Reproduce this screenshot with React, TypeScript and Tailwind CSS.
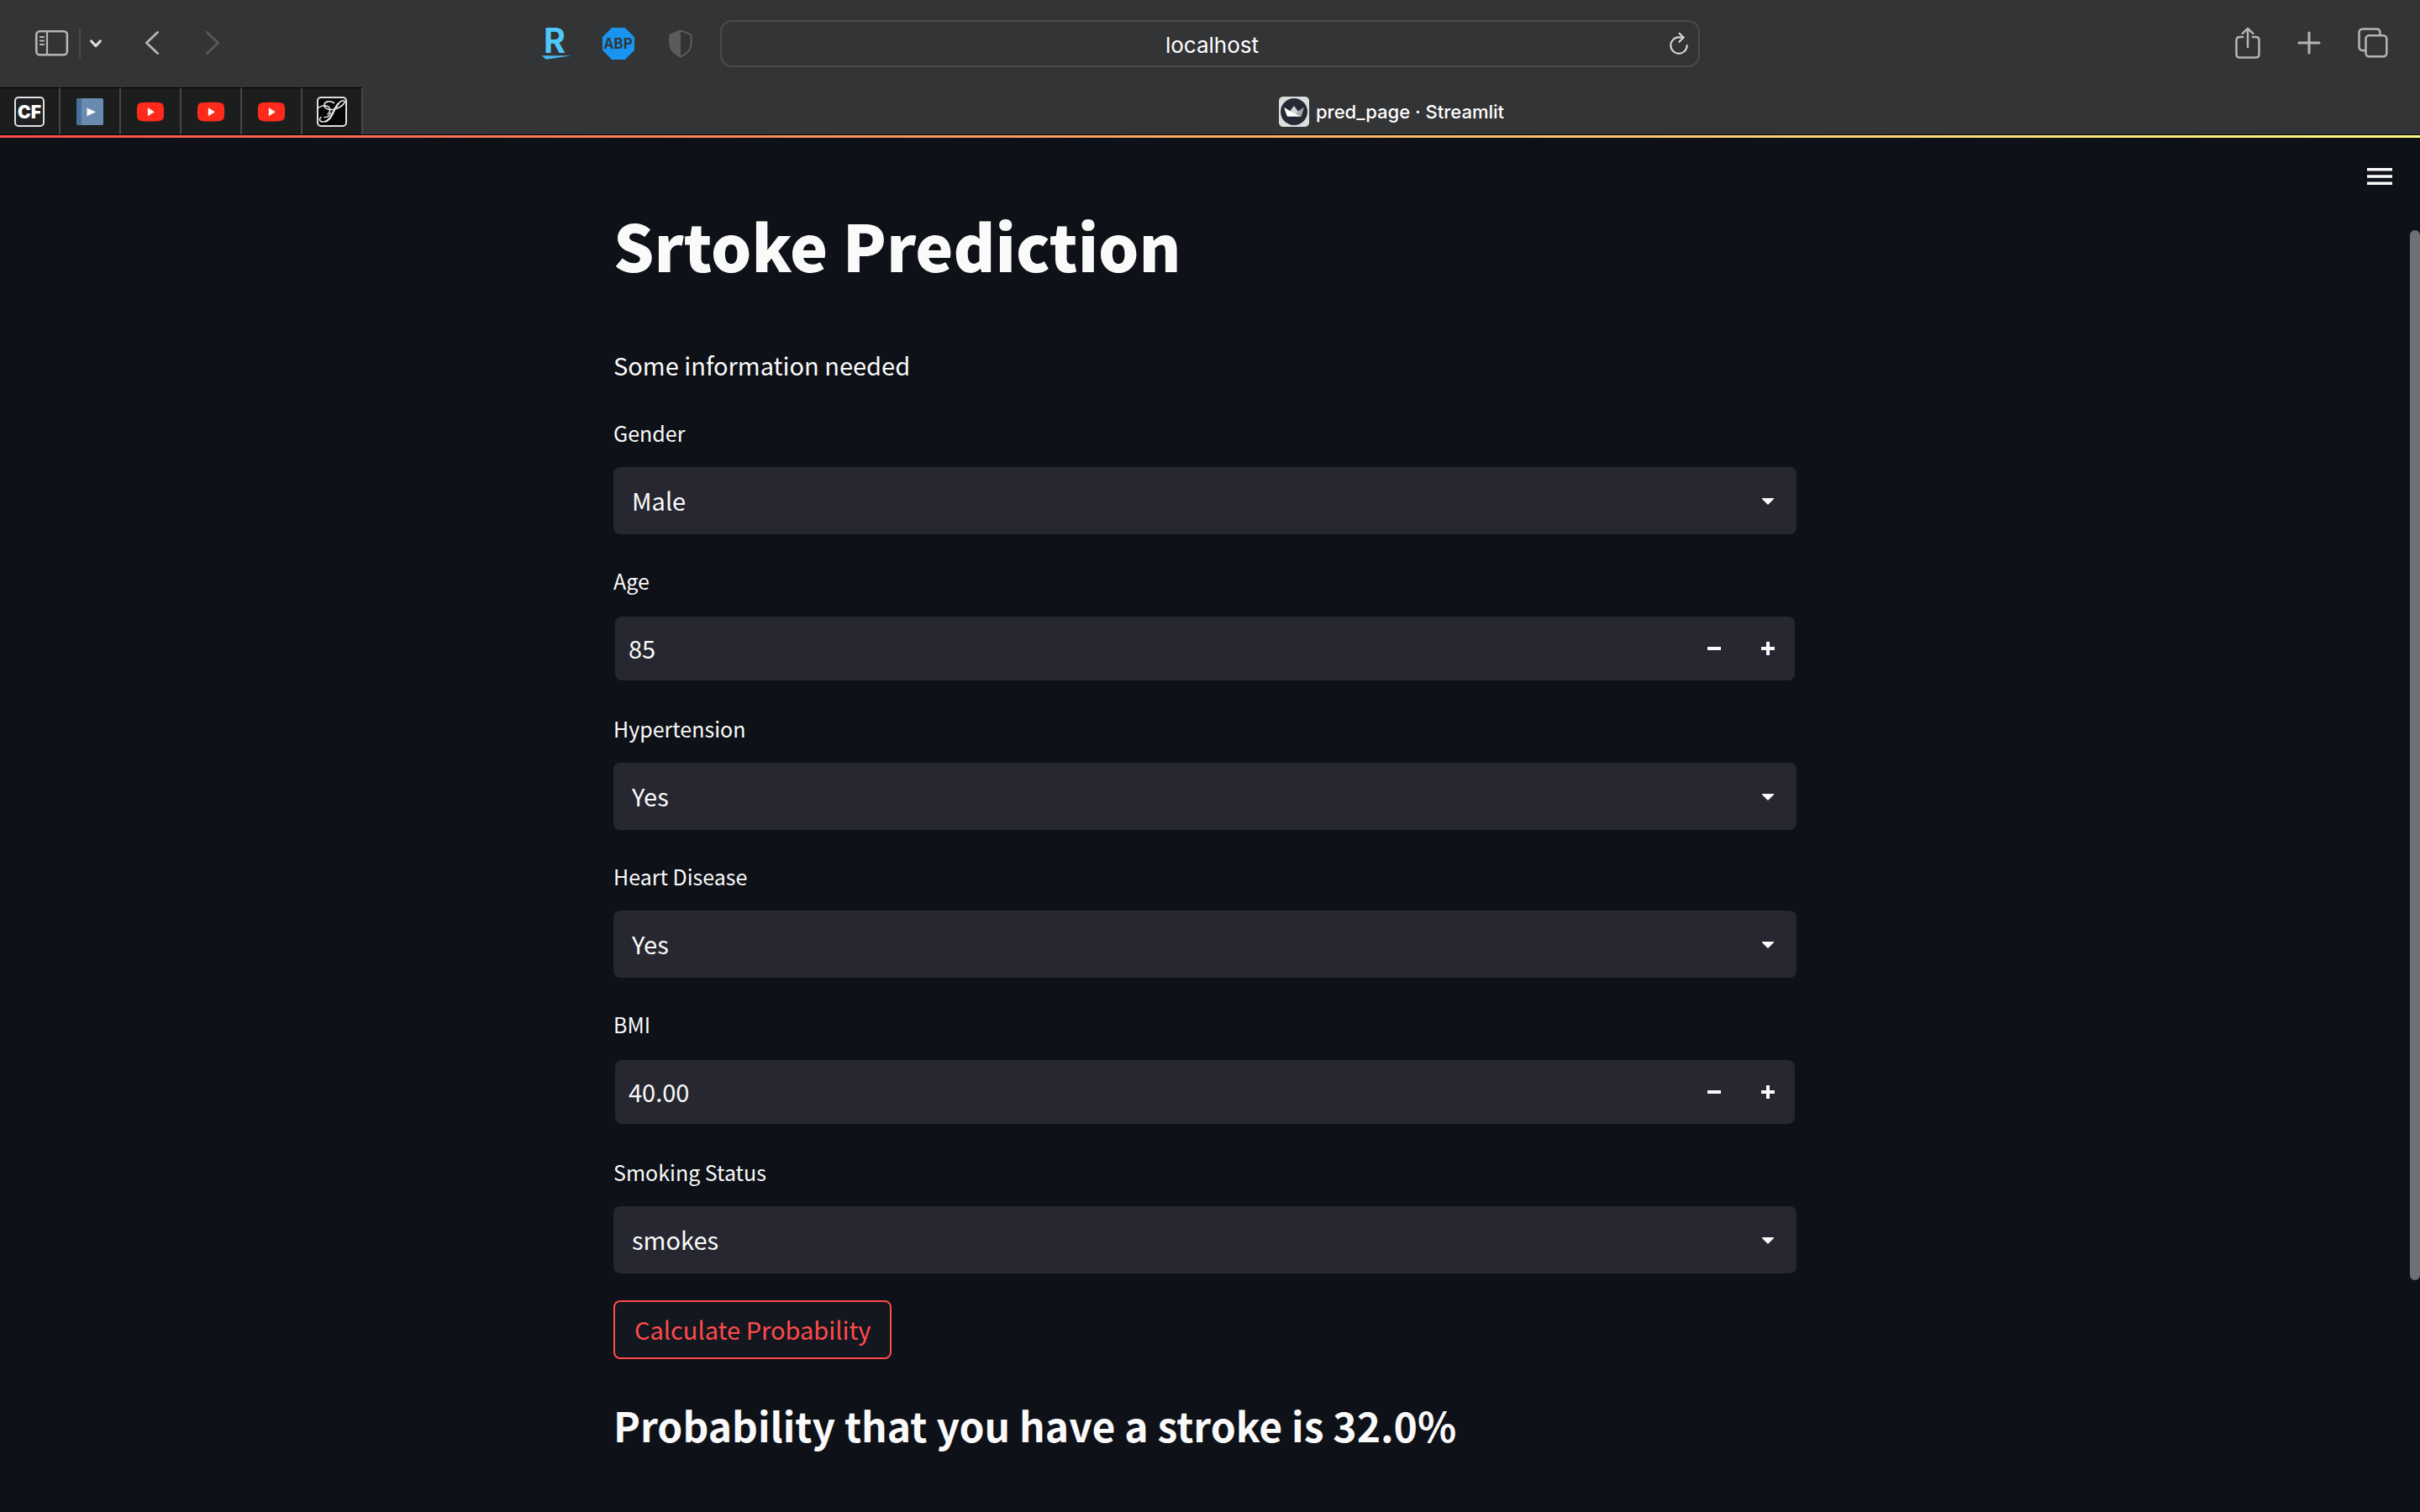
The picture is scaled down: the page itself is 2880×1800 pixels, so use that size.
import { useState } from "react";
import type { ReactNode } from "react";

type IconProps = { className?: string };

function SidebarIcon() {
  return (
    <svg width="40" height="32" viewBox="0 0 40 32" fill="none" stroke="#b4b5b6" strokeLinecap="round">
      <rect x="1.3" y="1.3" width="36.6" height="28" rx="4" strokeWidth="2.6" />
      <path d="M14 2v27" strokeWidth="2.2" />
      <path d="M5.8 8h4.4M5.800 12.500h4.400M5.800 17h4.400" strokeWidth="1.8" />
    </svg>
  );
}

function ChevronDown() {
  return (
    <svg width="16" height="12" viewBox="0 0 16 12" fill="none" stroke="#dededf" strokeWidth="3" strokeLinecap="round" strokeLinejoin="round">
      <path d="M2.500 2.800 8 8.600l5.500-5.800" />
    </svg>
  );
}

function BackIcon() {
  return (
    <svg width="18" height="30" viewBox="0 0 18 30" fill="none" stroke="#b4b5b6" strokeWidth="2.8" strokeLinecap="round" strokeLinejoin="round">
      <path d="M15.600 1.500 2.400 14l13.200 12.500" />
    </svg>
  );
}

function ForwardIcon() {
  return (
    <svg width="18" height="30" viewBox="0 0 18 30" fill="none" stroke="#58595b" strokeWidth="2.8" strokeLinecap="round" strokeLinejoin="round">
      <path d="M2.400 1.500 15.600 14 2.400 26.500" />
    </svg>
  );
}

function RakutenIcon() {
  return (
    <svg className="overflow-visible" width="40" height="40" viewBox="0 0 40 40">
      <text x="4" y="31" fontFamily="'Noto Sans CJK SC', sans-serif" fontWeight="700" fontSize="40" fill="#4fc9fb">
        R
      </text>
      <path d="M2.500 34.200h35.500L8 38.800z" fill="#47b7f2" />
    </svg>
  );
}

function AbpIcon() {
  return (
    <svg className="overflow-visible" width="40" height="40" viewBox="0 0 40 40">
      <path d="M12.200 1h15.600L39 12.200v15.600L27.800 39H12.200L1 27.800V12.200z" fill="#1994ef" />
      <text x="20" y="26" textAnchor="middle" fontFamily="'Noto Sans CJK SC', sans-serif" fontWeight="700" fontSize="17" fill="#333436">
        ABP
      </text>
    </svg>
  );
}

function ShieldIcon() {
  return (
    <svg width="28" height="34" viewBox="0 0 28 34">
      <path
        d="M14 1.500 2.800 5.600C1.900 6 1.400 6.600 1.400 7.600v9.800c0 6.600 5 11.500 12.600 14.900 7.600-3.400 12.600-8.300 12.600-14.900V7.600c0-1-.5-1.600-1.400-2z"
        fill="none"
        stroke="#5a5b5d"
        strokeWidth="2"
      />
      <path d="M14 1 2.400 5.400C1 6 .600 6.800.600 7.600v9.800c0 7 5.400 12.200 13.400 15.800z" fill="#5a5b5d" />
    </svg>
  );
}

function ReloadIcon() {
  return (
    <svg width="24" height="28" viewBox="0 0 24 28" fill="none" stroke="#dededf" strokeWidth="2" strokeLinecap="round" strokeLinejoin="round">
      <path d="M17.500 6.500 12 6.300A9.700 9.700 0 1 0 21.700 16" />
      <path d="M12.600 1.800 17.600 6.600l-5.200 5.200" />
    </svg>
  );
}

function ShareIcon() {
  return (
    <svg width="30" height="38" viewBox="0 0 30 38" fill="none" stroke="#b4b5b6" strokeWidth="2.500" strokeLinecap="round" strokeLinejoin="round">
      <path d="M9.200 12H5.800C3 12 1.500 13.500 1.500 16v16.400c0 2.600 1.500 4.100 4.300 4.100h18.400c2.800 0 4.300-1.500 4.300-4.100V16c0-2.500-1.500-4-4.300-4h-3.400" />
      <path d="M15 24V2M8.800 7.800 15 1.800l6.200 6" />
    </svg>
  );
}

function NewTabIcon() {
  return (
    <svg width="28" height="28" viewBox="0 0 28 28" fill="none" stroke="#b4b5b6" strokeWidth="3" strokeLinecap="round">
      <path d="M14 2v24M2 14h24" />
    </svg>
  );
}

function TabsIcon() {
  return (
    <svg width="36" height="36" viewBox="0 0 36 36" fill="none" stroke="#b4b5b6" strokeWidth="2.500">
      <path d="M9.500 27H6c-2.800 0-4.500-1.700-4.500-4.500V6C1.500 3.200 3.200 1.500 6 1.500h16c2.800 0 4.500 1.700 4.500 4.500v3" />
      <rect x="9.500" y="9.200" width="24.800" height="25" rx="4" />
    </svg>
  );
}

function CfIcon() {
  return (
    <svg width="36" height="36" viewBox="0 0 36 36">
      <rect x="1" y="1" width="34" height="34" rx="4" fill="#1f2023" stroke="#dfe1e0" strokeWidth="2" />
      <text x="18" y="26" textAnchor="middle" fontFamily="Inter, sans-serif" fontWeight="900" fontSize="21" fill="#fff">
        CF
      </text>
    </svg>
  );
}

function VideoNoteIcon() {
  return (
    <svg width="36" height="36" viewBox="0 0 36 36">
      <rect x="2" y="2" width="32" height="32" rx="2" fill="#6a8bb0" />
      <path d="M4 2h4v32H4a2 2 0 0 1-2-2V4a2 2 0 0 1 2-2z" fill="#4c6f9b" />
      <path d="M14.500 13.500 25 18.200l-10.500 5z" fill="#fff" />
    </svg>
  );
}

function YoutubeIcon() {
  return (
    <svg width="36" height="36" viewBox="0 0 36 36">
      <path d="M7 7.200c5-.700 17-.700 22 0 3 .3 4.600 2 4.800 4.800.4 4 .4 8.500 0 12-.2 2.800-1.800 4.500-4.800 4.900-5 .7-17 .7-22 0-3-.4-4.600-2.100-4.800-4.900-.4-3.500-.4-8 0-12C2.400 9.200 4 7.500 7 7.200z" fill="#fe2a1b" />
      <path d="M14.800 13.200v10l8-5z" fill="#fff" />
    </svg>
  );
}

function ScriptIcon() {
  return (
    <svg width="36" height="36" viewBox="0 0 36 36">
      <rect x="1" y="1" width="34" height="34" rx="4" fill="#040607" stroke="#dfe1e0" strokeWidth="2" />
      <g fill="none" stroke="#eceeed" strokeLinecap="round">
        <path d="M20.500 7.500C16 4.500 9.500 5.500 9 9.500c-.5 4 4 6.500 9 6 6.500-.7 13.500-4.500 15-8.500.8-3-3.500-3-6.500.5-4 4.500-6 10-8.500 14.500-2.500 5-7 8.500-11.500 8-3.500-.5-4-3.500-1.500-5.500" strokeWidth="1.600" />
        <path d="M25.500 8.500c-3.500 4-5.500 9.500-8 14-1.800 3.500-4 6-7 7" strokeWidth="2.200" />
        <path d="M2.500 13c4-3 9.500-3 12-.5 2 2.500 1 6-1.500 8.500M9 24.500c3 .5 6-1.500 7.500-5" strokeWidth="1.400" />
      </g>
    </svg>
  );
}

function StreamlitIcon() {
  return (
    <svg width="36" height="36" viewBox="0 0 36 36">
      <rect width="36" height="36" rx="5" fill="#dcdddd" />
      <circle cx="18" cy="18" r="16" fill="#262934" />
      <path d="M30 12.800 22.500 17.500 17 20l8.500 3.800c.8 0 1.200-.4 1.400-1z" fill="#a9a9ad" />
      <path d="M18 11l4.800 6.500L20 21l-7-3.500z" fill="#d4d4d6" />
      <path d="M6 12.800 13 17l13 6.800H11c-.8 0-1.300-.3-1.500-1z" fill="#fff" />
    </svg>
  );
}

function MinusIcon() {
  return (
    <svg width="16" height="16" viewBox="0 0 16 16" fill="#fafafa">
      <rect y="6" width="16" height="4" />
    </svg>
  );
}

function PlusIcon() {
  return (
    <svg width="16" height="16" viewBox="0 0 16 16" fill="#fafafa">
      <path d="M6 0h4v6h6v4h-6v6H6v-6H0V6h6z" />
    </svg>
  );
}

function CaretIcon({ className }: IconProps) {
  return (
    <svg className={className} width="14" height="8" viewBox="0 0 14 8" fill="#fafafa">
      <path d="M0 0h14v1L7 8 0 1z" />
    </svg>
  );
}

function MenuIcon() {
  return (
    <svg width="30" height="20" viewBox="0 0 30 20" fill="#fafafa">
      <path d="M0 0h30v3.400H0zM0 8.300h30v3.400H0zM0 16.600h30V20H0z" />
    </svg>
  );
}

function ToolButton({ label, className, children }: { label: string; className?: string; children: ReactNode }) {
  return (
    <button type="button" aria-label={label} className={`flex h-10 shrink-0 items-center justify-center ${className ?? ""}`}>
      {children}
    </button>
  );
}

function Toolbar() {
  return (
    <div className="flex h-[104px] items-start pt-6">
      <div className="flex h-14 flex-1 items-center">
        <ToolButton label="Sidebar" className="ml-[42px]">
          <SidebarIcon />
        </ToolButton>
        <div className="ml-3 h-9 w-[2px] bg-[#48494b]" />
        <ToolButton label="Tab groups" className="ml-[10px]">
          <ChevronDown />
        </ToolButton>
        <ToolButton label="Back" className="ml-[39px] w-10">
          <BackIcon />
        </ToolButton>
        <ToolButton label="Forward" className="ml-8 w-10">
          <ForwardIcon />
        </ToolButton>
        <div className="mr-[27px] ml-auto flex gap-[34px]">
          <ToolButton label="Rakuten" className="w-10">
            <RakutenIcon />
          </ToolButton>
          <ToolButton label="Adblock Plus" className="w-10">
            <AbpIcon />
          </ToolButton>
          <ToolButton label="Privacy report" className="w-10">
            <ShieldIcon />
          </ToolButton>
        </div>
      </div>
      <div className="flex h-14 w-[1166px] items-center rounded-[14px] border-2 border-[#4a4b4d] pr-[11px] pl-10">
        <input
          aria-label="Address"
          defaultValue="localhost"
          className="min-w-0 flex-1 bg-transparent pt-0.5 text-center font-['Inter',sans-serif] text-[26px] text-white outline-none"
        />
        <ToolButton label="Reload">
          <ReloadIcon />
        </ToolButton>
      </div>
      <div className="flex h-[53px] flex-1 items-center justify-end gap-11">
        <ToolButton label="Share">
          <ShareIcon />
        </ToolButton>
        <ToolButton label="New tab">
          <NewTabIcon />
        </ToolButton>
        <ToolButton label="Show tabs" className="mr-[38px]">
          <TabsIcon />
        </ToolButton>
      </div>
    </div>
  );
}

const pinnedTabs = [
  { name: "Codeforces", icon: <CfIcon /> },
  { name: "Course", icon: <VideoNoteIcon /> },
  { name: "YouTube 1", icon: <YoutubeIcon /> },
  { name: "YouTube 2", icon: <YoutubeIcon /> },
  { name: "YouTube 3", icon: <YoutubeIcon /> },
  { name: "Script", icon: <ScriptIcon /> },
];

function TabBar() {
  return (
    <div className="flex h-14">
      {pinnedTabs.map((tab) => (
        <button
          key={tab.name}
          type="button"
          aria-label={tab.name}
          className="flex w-[72px] shrink-0 items-center justify-center border-t border-r-2 border-t-black border-r-[#454647] bg-[#1c1e1d]"
        >
          {tab.icon}
        </button>
      ))}
      <button type="button" className="flex flex-1 items-center justify-center gap-2 pt-0.5 font-['Inter',sans-serif] text-[22px] font-medium text-white">
        <StreamlitIcon />
        <span>pred_page · Streamlit</span>
      </button>
    </div>
  );
}

function FieldLabel({ id, children }: { id: string; children: ReactNode }) {
  return (
    <label htmlFor={id} className="mb-[18px] block text-[25px] leading-[46px]">
      {children}
    </label>
  );
}

function SelectField({ id, label, options }: { id: string; label: string; options: string[] }) {
  return (
    <div>
      <FieldLabel id={id}>{label}</FieldLabel>
      <div className="relative">
        <select id={id} className="block h-20 w-full appearance-none rounded-lg bg-[#262730] pr-16 pl-[22px] text-[29px] outline-none">
          {options.map((option) => (
            <option key={option}>{option}</option>
          ))}
        </select>
        <CaretIcon className="pointer-events-none absolute top-[37px] right-[27px]" />
      </div>
    </div>
  );
}

function NumberField({ id, label, initial, digits }: { id: string; label: string; initial: number; digits: number }) {
  const [value, setValue] = useState(initial.toFixed(digits));
  const step = (delta: number) => setValue((Number(value) + delta).toFixed(digits));
  return (
    <div>
      <FieldLabel id={id}>{label}</FieldLabel>
      <div className="h-20 p-[2px]">
        <div className="flex h-full overflow-hidden rounded-lg bg-[#262730]">
          <input
            id={id}
            inputMode="decimal"
            value={value}
            onChange={(event) => setValue(event.target.value)}
            className="min-w-0 flex-1 bg-transparent pl-4 text-[29px] outline-none"
          />
          <button type="button" aria-label={`Decrease ${label}`} onClick={() => step(-1)} className="flex w-16 items-center justify-center">
            <MinusIcon />
          </button>
          <button type="button" aria-label={`Increase ${label}`} onClick={() => step(1)} className="flex w-16 items-center justify-center">
            <PlusIcon />
          </button>
        </div>
      </div>
    </div>
  );
}

export default function App() {
  return (
    <div className="flex min-h-screen flex-col bg-[#0e1117] font-['Noto_Sans_CJK_SC',sans-serif] text-[#fafafa]">
      <header className="border-b border-black bg-[#333436]">
        <Toolbar />
        <TabBar />
      </header>
      <div className="h-[3px] bg-linear-to-r from-[#ff4b4b] to-[#fffd80]" />
      <div className="relative flex-1 pr-3">
        <button type="button" aria-label="Menu" className="absolute top-9 right-[33px]">
          <MenuIcon />
        </button>
        <div className="absolute top-[110px] right-0 h-[1250px] w-3 rounded-full bg-[#6f7074]" />
        <main className="mx-auto flex max-w-[1408px] flex-col gap-8 pt-[74px]">
          <h1 className="mb-8 text-[76px] leading-[106px] font-black">Srtoke Prediction</h1>
          <p className="text-[29px] leading-[52px]">Some information needed</p>
          <SelectField id="gender" label="Gender" options={["Male", "Female"]} />
          <NumberField id="age" label="Age" initial={85} digits={0} />
          <SelectField id="hypertension" label="Hypertension" options={["Yes", "No"]} />
          <SelectField id="heart-disease" label="Heart Disease" options={["Yes", "No"]} />
          <NumberField id="bmi" label="BMI" initial={40} digits={2} />
          <SelectField id="smoking" label="Smoking Status" options={["smokes", "never smoked", "formerly smoked"]} />
          <button type="button" className="h-[70px] self-start rounded-lg border-2 border-[#ff4b4b] bg-[#13171f] px-[23px] text-[29px] text-[#ff4b4b]">
            Calculate Probability
          </button>
          <h2 className="mt-3 text-[48px] leading-[68px] font-semibold">Probability that you have a stroke is 32.0%</h2>
        </main>
      </div>
    </div>
  );
}
